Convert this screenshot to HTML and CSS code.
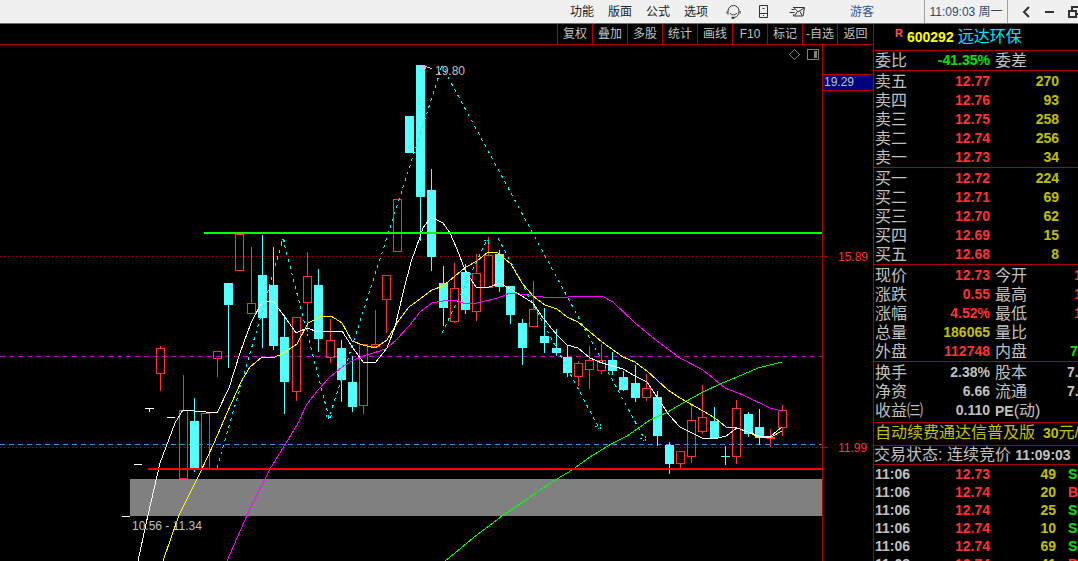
FILE: index.html
```
<!DOCTYPE html>
<html lang="zh-CN">
<head>
<meta charset="utf-8">
<title>远达环保 600292</title>
<link rel="stylesheet" href="styles.css">
</head>
<body>
<div class="app">
  <header class="topbar">
    <nav class="menu">
      <button>功能</button><button>版面</button><button>公式</button><button>选项</button>
      <button class="icon" aria-label="客服"><svg width="20" height="16" viewBox="0 0 20 16"><path d="M6 10.500V7a5.500 5.500 0 0 1 11 0c0 3.500-1.500 5.500-4.500 6.500M5 7.500v2M18 7v2.500M8 9c1.500 2.500 5 2.500 7 0"/><path d="M9.500 13.800h3" stroke-width="2"/></svg></button>
      <button class="icon" aria-label="手机"><svg width="20" height="16" viewBox="0 0 20 16"><path d="M5.500 1.500h8v12h-8zM5.500 9.500h8M8.500 4.500h2M9 11.500h1"/></svg></button>
      <button class="icon" aria-label="邮件"><svg width="20" height="16" viewBox="0 0 20 16"><path d="M7 3.500h11.500l-1.500 8.500H7.500l.5-2M8 3.500l4 4.500 6-4M9 11.500l2-3.500M16 11.500l-2-4M5.500 5.500h3M3.500 8.500h5"/></svg></button>
    </nav>
    <div class="session">
      <button class="user">游客</button>
      <time class="clock">11:09:03 周一</time>
      <div class="window">
        <button aria-label="后退"><svg width="12" height="14" viewBox="0 0 12 14"><path d="M9 2 4 7l5 5" stroke-width="2"/></svg></button>
        <button aria-label="最小化"><svg width="12" height="14" viewBox="0 0 12 14"><path d="M1 7h9" stroke-width="2"/></svg></button>
        <button aria-label="还原"><svg width="14" height="14" viewBox="0 0 14 14"><path d="M1 6h7v6H1zM4 6V2h8v7H8" stroke-width="2"/></svg></button>
      </div>
    </div>
  </header>
  <main class="body">
    <section class="left">
      <nav class="tools">
        <button>复权</button><button>叠加</button><button>多股</button><button>统计</button><button>画线</button><button>F10</button><button>标记</button><button>-自选</button><button>返回</button>
      </nav>
      <svg class="chart" id="chart" viewBox="0 45 873 516" preserveAspectRatio="xMinYMin meet" role="img" aria-label="K线图">
        <rect class="zone" x="130" y="479" width="692" height="37"/>
        <path class="dotted" d="M0 256.500H822M0 447.500H822"/>
        <path class="dash-purple" d="M0 356.500H822"/>
        <path class="dash-blue" d="M0 444.500H822"/>
        <g id="candles"></g>
        <path class="flat" d="M145 408.500h9M149.500 408v4M167 417.500h8M134 464.500h8M122 516.500h8"/>
        <path class="zigzag" d="M217 468 283 239 329 418 442 66 645 440M442 333 488 238M498 238 600 430"/>
        <path class="arrows" d="M281 243l2-4 3 4M326 415l3 4 3-4M440 70l2-4 4 4M484 240h4v4M595 426l5 3v-6M640 438l5 3v-6"/>
        <polyline class="ma green" points="445,561 455,553 473,538 502,516 523,502 543,488 557,479 572,470 590,457 603,449 613,443 627,436 650,420 668,412 683,403 703,392 720,384 737,377 758,368 782,362"/>
        <polyline class="ma magenta" points="227,561 248,513 270,469 294,430 298,423 307,404 318,390 330,377 342,367 352,361 363,356 380,351 387,348 397,339 409,326 420,312 432,303 443,301 455,300 466,304 477,303 498,298 510,293 520,294 533,296 543,297 568,297 577,296 602,296 613,302 635,323 657,341 680,358 703,370 725,388 743,395 770,408 782,411"/>
        <polyline class="ma yellow" points="163,561 179,515 200,473 214,443 227,413 242,380 250,367 262,357 275,357 282,354 297,344 308,323 320,317 331,316 342,323 352,341 363,345 375,348 387,340 397,323 409,307 432,290 443,286 455,276 466,267 477,261 488,252 498,253 511,264 522,283 533,296 545,305 557,309 567,317 578,322 602,342 623,357 635,362 647,371 657,380 668,390 680,398 703,411 715,418 726,427 737,428 748,432 758,437 771,437 782,431"/>
        <polyline class="ma white" points="138,561 148,515 160,463 166,447 175,423 183,410 217,413 229,388 240,353 251,323 262,302 273,301 285,317 296,333 307,328 318,332 330,331 342,331 353,348 363,362 375,363 387,348 395,327 403,293 411,262 420,237 423,228 431,217 443,223 450,233 457,249 465,270 476,287 489,287 500,283 522,296 533,303 543,318 557,335 567,345 578,348 590,358 602,363 623,369 635,376 647,382 657,397 669,415 680,427 702,438 718,438 726,436 737,428 748,432 759,436 771,436 782,427"/>
        <path class="line-green" d="M204 233H822"/>
        <path class="line-red" d="M148 469H822"/>
        <path class="pointer" d="M420 66h5v2h-3M425 66l7 3"/>
        <path class="marks" d="M794.500 49.500l5 5-5 5-5-5z"/>
        <rect class="marks" x="807.500" y="49.500" width="11" height="10" rx="1"/>
        <rect class="mark-fill" x="814" y="51" width="3" height="7"/>
        <text class="note" x="435" y="75">19.80</text>
        <text class="note" x="132" y="530">10.56 - 11.34</text>
        <path class="axis" d="M822.500 45V561M822 256.500h6M822 447.500h6"/>
        <rect class="cursor" x="823" y="75" width="50" height="15"/>
        <path class="axis" d="M823 74.500h50M823 90.500h50"/>
        <text class="note" x="824" y="86">19.29</text>
        <text class="price" x="838" y="261">15.89</text>
        <text class="price" x="838" y="452">11.99</text>
      </svg>
    </section>
    <aside class="quote">
      <h1><sup>R</sup><b>600292</b><span>远达环保</span></h1>
      <table class="grid one">
        <tr><th>委比</th><td class="dn">-41.35%</td><th class="second">委差</th><td></td></tr>
      </table>
      <table class="book">
        <tr><th>卖五</th><td>12.77</td><td>270</td></tr>
        <tr><th>卖四</th><td>12.76</td><td>93</td></tr>
        <tr><th>卖三</th><td>12.75</td><td>258</td></tr>
        <tr><th>卖二</th><td>12.74</td><td>256</td></tr>
        <tr><th>卖一</th><td>12.73</td><td>34</td></tr>
      </table>
      <table class="book">
        <tr><th>买一</th><td>12.72</td><td>224</td></tr>
        <tr><th>买二</th><td>12.71</td><td>69</td></tr>
        <tr><th>买三</th><td>12.70</td><td>62</td></tr>
        <tr><th>买四</th><td>12.69</td><td>15</td></tr>
        <tr><th>买五</th><td>12.68</td><td>8</td></tr>
      </table>
      <table class="grid">
        <tr><th>现价</th><td class="up">12.73</td><th class="second">今开</th><td class="up far">1</td></tr>
        <tr><th>涨跌</th><td class="up">0.55</td><th class="second">最高</th><td class="up far">1</td></tr>
        <tr><th>涨幅</th><td class="up">4.52%</td><th class="second">最低</th><td class="up far">1</td></tr>
        <tr><th>总量</th><td class="vol">186065</td><th class="second">量比</th><td></td></tr>
        <tr><th>外盘</th><td class="up">112748</td><th class="second">内盘</th><td class="dn mid">7</td></tr>
      </table>
      <table class="grid three">
        <tr><th>换手</th><td>2.38%</td><th class="second">股本</th><td>7.</td></tr>
        <tr><th>净资</th><td>6.66</td><th class="second">流通</th><td>7.</td></tr>
        <tr><th>收益㈢</th><td>0.110</td><th class="second"><b>PE</b>(动)</th><td></td></tr>
      </table>
      <p class="promo">自动续费通达信普及版 <span><b>30</b>元/</span></p>
      <p class="status">交易状态: 连续竞价 <b>11:09:03</b></p>
      <table class="ticks">
        <tr><td>11:06</td><td>12.73</td><td>49</td><td class="dn">S</td></tr>
        <tr><td>11:06</td><td>12.74</td><td>20</td><td class="up">B</td></tr>
        <tr><td>11:06</td><td>12.74</td><td>25</td><td class="dn">S</td></tr>
        <tr><td>11:06</td><td>12.74</td><td>10</td><td class="dn">S</td></tr>
        <tr><td>11:06</td><td>12.74</td><td>69</td><td class="dn">S</td></tr>
        <tr><td>11:08</td><td>12.74</td><td>41</td><td class="up">B</td></tr>
      </table>
    </aside>
  </main>
</div>
<script src="chart.js"></script>
</body>
</html>
```
FILE: styles.css
```
* { box-sizing: border-box; }
body {
  margin: 0;
  background: #000;
  color: #c0c0c0;
  font: 12px/16px "Liberation Sans", "Noto Sans CJK SC", sans-serif;
}
button {
  margin: 0;
  padding: 0;
  border: 0;
  background: none;
  color: inherit;
  font: inherit;
  white-space: nowrap;
}
.app { display: flex; flex-direction: column; height: 100vh; overflow: hidden; }

.topbar {
  display: flex;
  justify-content: flex-end;
  flex: 0 0 24px;
  background: #f0f0f0;
  border-bottom: 1px solid #707070;
  color: #222;
}
.menu { display: flex; align-items: center; gap: 14px; }
.icon { width: 18px; height: 16px; }
.topbar svg { display: block; fill: none; stroke: #333; }
.session { display: flex; align-items: stretch; margin-left: 46px; }
.user { width: 74px; text-align: left; color: #2b579a; }
.clock {
  display: flex;
  align-items: center;
  justify-content: center;
  width: 84px;
  border: solid #a0a0a0;
  border-width: 0 1px;
  color: #2b4a70;
}
.window { display: flex; align-items: center; gap: 12px; width: 70px; padding-left: 12px; overflow: hidden; }
.window button { flex: none; }

.body { display: flex; flex: 1; min-height: 0; }
.left { display: flex; flex-direction: column; flex: 1; min-width: 0; }
.tools {
  display: flex;
  justify-content: flex-end;
  flex: 0 0 21px;
  border-bottom: 1px solid #b00000;
}
.tools button { width: 35px; border-left: 1px solid #b00000; }
.tools button:last-child { width: 36px; }

.chart { display: block; flex: 1; width: 100%; min-height: 0; shape-rendering: crispEdges; }
.chart path, .chart polyline { fill: none; }
.zone { fill: #808080; }
.dotted { stroke: #b00000; stroke-dasharray: 1 3; }
.dash-purple { stroke: #c000c0; stroke-dasharray: 5 4; }
.dash-blue { stroke: #3c8ce6; stroke-dasharray: 5 4; }
.flat { stroke: #fff; }
.zigzag { stroke: #00ffff; stroke-dasharray: 3 4; }
.arrows { stroke: #00ffff; stroke-dasharray: 2 1; }
.green { stroke: #00ff00; }
.magenta { stroke: #ff00ff; }
.yellow { stroke: #ffff00; }
.white { stroke: #fff; }
.line-green { stroke: #00ff00; stroke-width: 2; }
.line-red { stroke: #ff0000; stroke-width: 2; }
.pointer { stroke: #c0c0c0; }
.marks { fill: none; stroke: #808080; }
.mark-fill { fill: #808080; }
.axis { stroke: #b00000; }
.cursor { fill: #000080; }
.note { fill: #c0c0c0; font-size: 12px; }
.price { fill: #ff3232; font-size: 12px; }
.up-body { fill: none; stroke: #ff3232; }
.up-wick { stroke: #ff3232; }
.down-body { fill: #54ffff; }
.down-wick { stroke: #54ffff; }

.quote {
  flex: 0 0 205px;
  border-left: 1px solid #b00000;
  overflow: hidden;
  font-size: 16px;
  white-space: nowrap;
}
.quote b { font-size: 14px; font-weight: 700; line-height: 14px; }
.quote h1 {
  display: flex;
  align-items: center;
  gap: 4px;
  height: 27px;
  margin: 0;
  padding-left: 21px;
  border-bottom: 1px solid #b00000;
  font-size: 16px;
  font-weight: 400;
  color: #00e6ff;
}
.quote h1 sup { align-self: flex-start; font-size: 11px; line-height: 18px; font-weight: 700; color: #ff5050; }
.quote h1 b { color: #ffff00; }
.quote table {
  width: 100%;
  table-layout: fixed;
  border-collapse: separate;
  border-spacing: 0;
  border-bottom: 1px solid #b00000;
}
.quote tr { height: 19px; }
.quote th, .quote td { padding: 0; line-height: 19px; }
.quote th { width: 60px; padding-left: 1px; text-align: left; font-weight: 400; }
.quote td { font-size: 14px; font-weight: 700; text-align: right; }
.quote .book { padding-top: 1px; }
.book td:nth-child(2) { width: 56px; color: #ff3232; }
.quote .book td:nth-child(3) { padding-right: 19px; color: #c0c000; }
.grid { padding-top: 1px; }
.grid.one { padding: 0; }
.grid.three { padding: 1px 0 2px; }
.grid td:nth-child(2) { width: 56px; }
.quote .second { width: 77px; padding-left: 5px; }
.quote .grid td:nth-child(4) { text-align: left; }
.quote .mid { padding-left: 3px; }
.quote .far { padding-left: 7px; }
.up { color: #ff3232; }
.dn { color: #00e600; }
.vol { color: #c0c000; }
.promo, .status { margin: 0; border-bottom: 1px solid #b00000; }
.promo { display: flex; gap: 8px; height: 23px; padding-left: 1px; line-height: 20px; color: #c0c000; }
.status { height: 19px; line-height: 17px; }
.quote .ticks { border: 0; }
.quote .ticks tr { height: 18px; }
.quote .ticks td { line-height: 18px; }
.quote .ticks td:nth-child(1) { width: 60px; padding-left: 1px; text-align: left; }
.ticks td:nth-child(2) { width: 56px; color: #ff3232; }
.ticks td:nth-child(3) { width: 66px; color: #c0c000; }
.quote .ticks td:nth-child(4) { padding-left: 12px; text-align: left; }
```
FILE: chart.js
```
// Each row: kind (u = hollow red, d = solid cyan), left x, body top, body bottom, high, low
const rows = [
  ['u',156,348,374,346,391],['u',179,410,479,375,479],['d',190,421,468,398,472],['u',201,413,469,413,469],
  ['u',213,351,359,351,377],['d',224,283,305,283,368],['u',235,234,271,234,271],['u',247,303,314,247,314],
  ['d',258,275,318,235,348],['d',269,285,346,247,350],['d',280,337,382,315,414],['u',292,317,392,317,401],
  ['u',303,276,303,252,332],['d',314,285,339,269,352],['u',326,340,358,319,363],['d',337,348,380,340,402],
  ['d',348,382,407,356,412],['u',359,344,406,344,414],['u',371,344,347,310,347],['u',382,275,300,275,333],
  ['u',393,199,252,199,252],['d',405,116,153,116,153],['d',416,65,197,65,241],['d',427,190,257,169,271],
  ['d',439,283,308,266,326],['u',450,288,322,263,323],['d',461,272,310,264,314],['u',472,273,312,254,321],
  ['u',484,255,288,237,288],['d',495,254,287,250,292],['d',506,286,315,286,324],['d',518,323,348,319,365],
  ['u',529,309,327,281,327],['d',540,336,343,308,353],['d',552,348,353,329,356],['d',563,357,373,345,377],
  ['u',574,363,377,361,386],['u',585,360,370,346,389],['u',597,360,371,344,374],['d',608,360,371,352,375],
  ['d',619,377,390,371,391],['d',631,383,398,365,402],['u',642,388,398,374,401],['d',653,397,436,391,446],
  ['d',665,445,464,442,474],['u',676,451,464,451,468],['u',687,420,457,405,463],['u',698,417,432,385,434],
  ['d',710,421,438,407,438],['d',721,456,457,446,465],['u',732,408,457,400,464],['d',744,414,434,412,437],
  ['d',755,427,438,409,445],['u',766,437,439,429,447],['u',778,410,428,405,436]
];
const ns = 'http://www.w3.org/2000/svg';
const group = document.getElementById('candles');
function add(name, attrs) {
  const el = document.createElementNS(ns, name);
  for (const key in attrs) el.setAttribute(key, attrs[key]);
  group.appendChild(el);
}
for (const [kind, x, top, bottom, high, low] of rows) {
  const mid = x + 4.5;
  if (kind === 'u') {
    add('path', { class: 'up-wick', d: `M${mid} ${high}V${top}M${mid} ${bottom}V${low}` });
    add('rect', { class: 'up-body', x: x + .5, y: top + .5, width: 8, height: Math.max(1, bottom - top - 1) });
  } else {
    add('path', { class: 'down-wick', d: `M${mid} ${high}V${low}` });
    add('rect', { class: 'down-body', x, y: top, width: 9, height: bottom - top });
  }
}
```
